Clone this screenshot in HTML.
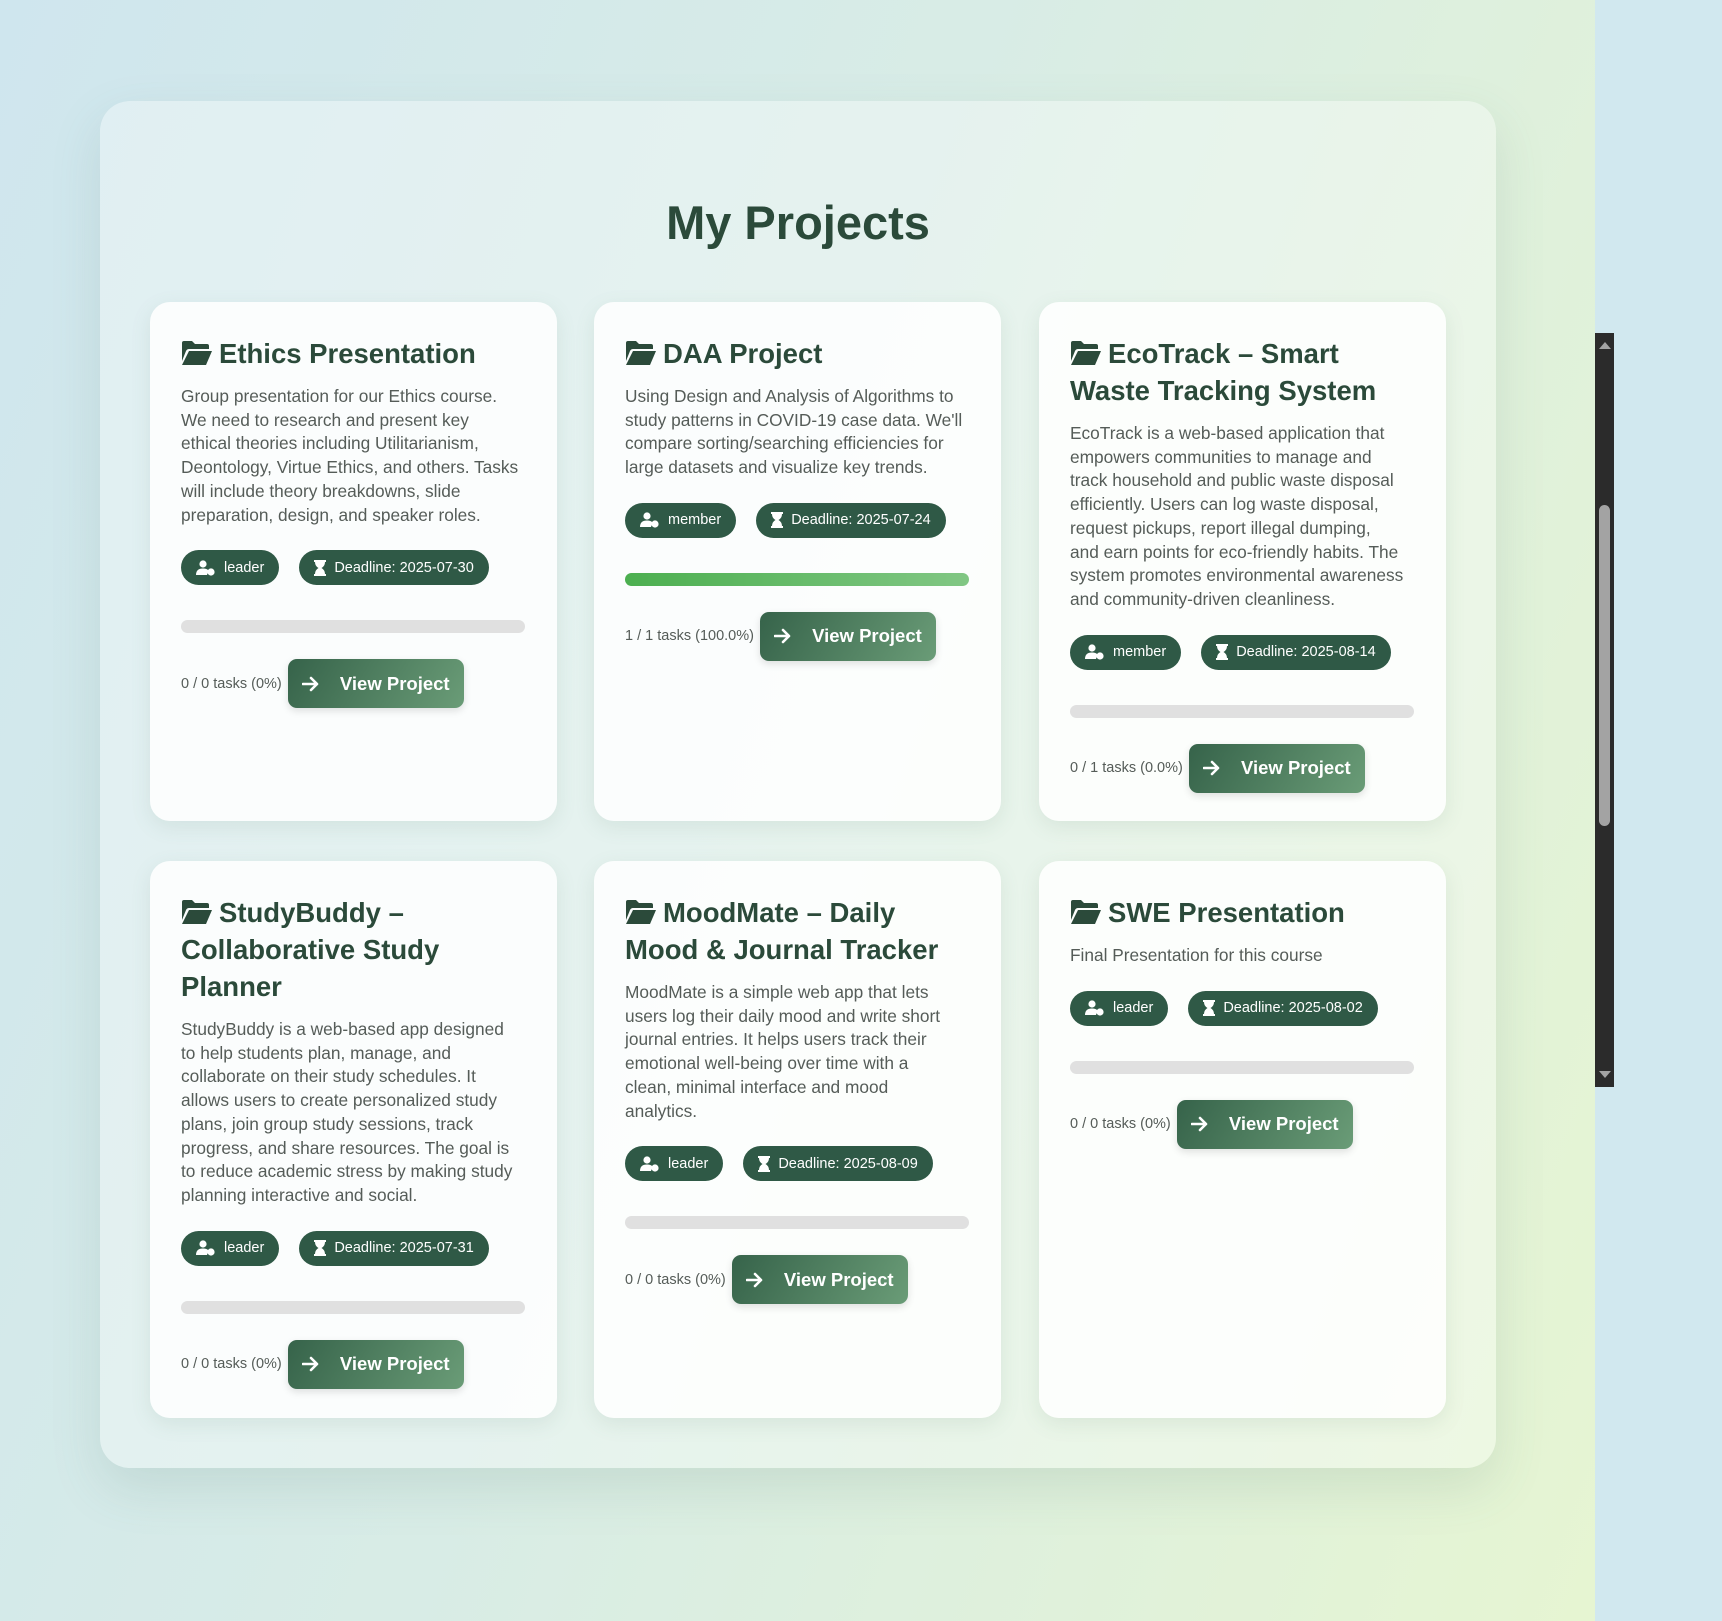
<!DOCTYPE html>
<html><head><meta charset="utf-8"><style>
*{box-sizing:border-box;margin:0;padding:0}
html,body{width:1722px;height:1621px;overflow:hidden}
body{font-family:"Liberation Sans",sans-serif;background:#d1e8ef;position:relative}
.bg{position:absolute;left:0;top:0;width:1595px;height:1621px;background:linear-gradient(110deg,#cfe6ee 0%,#d8ece6 45%,#e6f5d2 100%)}
.sb{position:absolute;left:1595px;top:333px;width:19px;height:754px;background:#2b2b2b}
.sb .th{position:absolute;left:4px;top:172px;width:11px;height:321px;border-radius:6px;background:#a3a3a3}
.sb .up{position:absolute;left:4px;top:9px;border-left:6px solid transparent;border-right:6px solid transparent;border-bottom:7px solid #a3a3a3}
.sb .dn{position:absolute;left:4px;bottom:9px;border-left:6px solid transparent;border-right:6px solid transparent;border-top:7px solid #a3a3a3}
.wrap{position:absolute;left:100px;top:101px;width:1396px;height:1367px;border-radius:30px;background:rgba(255,255,255,0.35);box-shadow:0 20px 50px rgba(80,120,110,0.15)}
h1{position:absolute;top:193px;text-align:center;font-size:47px;line-height:60px;color:#2b4a3a;font-weight:bold}
.card{position:absolute;width:407px;background:rgba(255,255,255,0.85);border-radius:20px;padding:33px 20px 0 31px;box-shadow:0 6px 20px rgba(90,130,110,0.12)}
.t{font-size:27.5px;line-height:37px;font-weight:bold;color:#2b4a3a;margin-bottom:13px;padding-right:10px}
.t svg{vertical-align:-3px;margin-right:6px}
.d{font-size:17.3px;line-height:23.7px;color:#555c58;white-space:nowrap}
.bs{margin-top:23px;display:flex;gap:20px}
.b{height:35px;border-radius:18px;background:#2f5946;color:#fff;font-size:14.5px;display:flex;align-items:center;padding:0 15px}
.b svg{margin-right:8px}
.pb{margin-top:35px;height:13px;border-radius:7px;background:#e0e0e0;overflow:hidden;width:344px}
.pb i{display:block;height:100%;background:linear-gradient(90deg,#4caf50,#81c784)}
.ft{margin-top:26px;display:flex;align-items:center}
.tk{font-size:14.5px;color:#555c58;margin-right:6px}
.btn{width:176px;height:49px;border-radius:9px;background:linear-gradient(120deg,#36634a,#6a9c77);color:#fff;font-size:18.5px;font-weight:bold;display:flex;align-items:center;justify-content:center;box-shadow:0 3px 8px rgba(0,0,0,.12)}
.btn svg{margin-right:20px}
</style></head><body>
<div class="bg"></div>
<div class="sb"><div class="up"></div><div class="th"></div><div class="dn"></div></div>
<div class="wrap"></div>
<h1 style="left:100px;width:1396px">My Projects</h1>

<svg width="0" height="0" style="position:absolute"><defs>
<symbol id="fo" viewBox="0 0 32 26"><path d="M1 3 Q1 1 3 1 H11 L14 4 H26 Q28 4 28 6 V9 H8 Q6 9 5 11 L1 21 Z" fill="#2b4a3a"/><path d="M8 11 H31 L25 25 H1 Z" fill="#2b4a3a"/></symbol>
<symbol id="us" viewBox="0 0 20 16"><circle cx="7" cy="4" r="3.6" fill="#fff"/><path d="M0 15 Q0 8.5 7 8.5 Q11 8.5 12.5 10.5 L11 15 Z" fill="#fff"/><circle cx="15" cy="12" r="3.6" fill="#fff"/></symbol>
<symbol id="hg" viewBox="0 0 12 16"><path d="M0 0 H12 V2 H11 Q11 6 7.5 8 Q11 10 11 14 H12 V16 H0 V14 H1 Q1 10 4.5 8 Q1 6 1 2 H0 Z" fill="#fff"/></symbol>
<symbol id="ar" viewBox="0 0 18 16"><path d="M1 8 H15 M9 2 L15 8 L9 14" stroke="#fff" stroke-width="2.6" fill="none" stroke-linecap="round" stroke-linejoin="round"/></symbol>
</defs></svg>

<div class="card" style="left:150px;top:302px;height:519px">
<div class="t"><svg width="32" height="26"><use href="#fo"/></svg>Ethics Presentation</div>
<div class="d">Group presentation for our Ethics course.<br>We need to research and present key<br>ethical theories including Utilitarianism,<br>Deontology, Virtue Ethics, and others. Tasks<br>will include theory breakdowns, slide<br>preparation, design, and speaker roles.</div>
<div class="bs"><div class="b"><svg width="20" height="16"><use href="#us"/></svg>leader</div><div class="b"><svg width="12" height="16"><use href="#hg"/></svg>Deadline: 2025-07-30</div></div>
<div class="pb"></div>
<div class="ft"><span class="tk">0 / 0 tasks (0%)</span><div class="btn"><svg width="18" height="16"><use href="#ar"/></svg>View Project</div></div>
</div>

<div class="card" style="left:594px;top:302px;height:519px">
<div class="t"><svg width="32" height="26"><use href="#fo"/></svg>DAA Project</div>
<div class="d">Using Design and Analysis of Algorithms to<br>study patterns in COVID-19 case data. We'll<br>compare sorting/searching efficiencies for<br>large datasets and visualize key trends.</div>
<div class="bs"><div class="b"><svg width="20" height="16"><use href="#us"/></svg>member</div><div class="b"><svg width="12" height="16"><use href="#hg"/></svg>Deadline: 2025-07-24</div></div>
<div class="pb"><i style="width:100%"></i></div>
<div class="ft"><span class="tk">1 / 1 tasks (100.0%)</span><div class="btn"><svg width="18" height="16"><use href="#ar"/></svg>View Project</div></div>
</div>

<div class="card" style="left:1039px;top:302px;height:519px">
<div class="t"><svg width="32" height="26"><use href="#fo"/></svg>EcoTrack – Smart Waste Tracking System</div>
<div class="d">EcoTrack is a web-based application that<br>empowers communities to manage and<br>track household and public waste disposal<br>efficiently. Users can log waste disposal,<br>request pickups, report illegal dumping,<br>and earn points for eco-friendly habits. The<br>system promotes environmental awareness<br>and community-driven cleanliness.</div>
<div class="bs"><div class="b"><svg width="20" height="16"><use href="#us"/></svg>member</div><div class="b"><svg width="12" height="16"><use href="#hg"/></svg>Deadline: 2025-08-14</div></div>
<div class="pb"></div>
<div class="ft"><span class="tk">0 / 1 tasks (0.0%)</span><div class="btn"><svg width="18" height="16"><use href="#ar"/></svg>View Project</div></div>
</div>

<div class="card" style="left:150px;top:861px;height:557px">
<div class="t"><svg width="32" height="26"><use href="#fo"/></svg>StudyBuddy –<br>Collaborative Study<br>Planner</div>
<div class="d">StudyBuddy is a web-based app designed<br>to help students plan, manage, and<br>collaborate on their study schedules. It<br>allows users to create personalized study<br>plans, join group study sessions, track<br>progress, and share resources. The goal is<br>to reduce academic stress by making study<br>planning interactive and social.</div>
<div class="bs"><div class="b"><svg width="20" height="16"><use href="#us"/></svg>leader</div><div class="b"><svg width="12" height="16"><use href="#hg"/></svg>Deadline: 2025-07-31</div></div>
<div class="pb"></div>
<div class="ft"><span class="tk">0 / 0 tasks (0%)</span><div class="btn"><svg width="18" height="16"><use href="#ar"/></svg>View Project</div></div>
</div>

<div class="card" style="left:594px;top:861px;height:557px">
<div class="t"><svg width="32" height="26"><use href="#fo"/></svg>MoodMate – Daily<br>Mood &amp; Journal Tracker</div>
<div class="d">MoodMate is a simple web app that lets<br>users log their daily mood and write short<br>journal entries. It helps users track their<br>emotional well-being over time with a<br>clean, minimal interface and mood<br>analytics.</div>
<div class="bs"><div class="b"><svg width="20" height="16"><use href="#us"/></svg>leader</div><div class="b"><svg width="12" height="16"><use href="#hg"/></svg>Deadline: 2025-08-09</div></div>
<div class="pb"></div>
<div class="ft"><span class="tk">0 / 0 tasks (0%)</span><div class="btn"><svg width="18" height="16"><use href="#ar"/></svg>View Project</div></div>
</div>

<div class="card" style="left:1039px;top:861px;height:557px">
<div class="t"><svg width="32" height="26"><use href="#fo"/></svg>SWE Presentation</div>
<div class="d">Final Presentation for this course</div>
<div class="bs"><div class="b"><svg width="20" height="16"><use href="#us"/></svg>leader</div><div class="b"><svg width="12" height="16"><use href="#hg"/></svg>Deadline: 2025-08-02</div></div>
<div class="pb"></div>
<div class="ft"><span class="tk">0 / 0 tasks (0%)</span><div class="btn"><svg width="18" height="16"><use href="#ar"/></svg>View Project</div></div>
</div>
</body></html>
